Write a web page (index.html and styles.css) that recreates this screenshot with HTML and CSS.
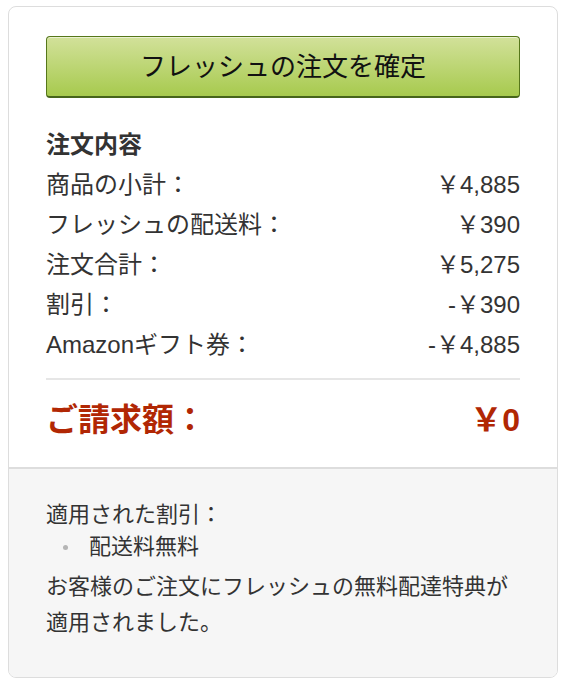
FILE: index.html
```html
<!DOCTYPE html>
<html lang="ja">
<head>
<meta charset="utf-8">
<link rel="stylesheet" href="styles.css">
</head>
<body>
<div class="card">
  <div class="main">
    <button class="place-btn" type="button">フレッシュの注文を確定</button>
    <h3 class="summary-title">注文内容</h3>
    <div class="row"><span>商品の小計：</span><span>￥4,885</span></div>
    <div class="row"><span>フレッシュの配送料：</span><span>￥390</span></div>
    <div class="row"><span>注文合計：</span><span>￥5,275</span></div>
    <div class="row"><span>割引：</span><span>-￥390</span></div>
    <div class="row"><span>Amazonギフト券：</span><span>-￥4,885</span></div>
    <div class="divider"></div>
    <div class="row total"><span>ご請求額：</span><span>￥0</span></div>
  </div>
  <div class="foot">
    <div class="foot-title">適用された割引：</div>
    <ul class="promo-list">
      <li>配送料無料</li>
    </ul>
    <p class="note">お客様のご注文にフレッシュの無料配達特典が適用されました。</p>
  </div>
</div>
</body>
</html>
```
FILE: styles.css
```css
* { box-sizing: border-box; }
html, body { background: #fff; }
body {
  margin: 6px 0 0 8px;
  font-family: "Liberation Sans", "Noto Sans CJK JP", sans-serif;
  color: #333;
}
.card {
  width: 550px;
  border: 1px solid #ddd;
  border-radius: 8px;
  overflow: hidden;
}
.main {
  padding: 29px 37px 25px;
  border-bottom: 2px solid #ddd;
}
.place-btn {
  display: block;
  width: 100%;
  height: 62px;
  margin: 0;
  padding: 0;
  border: 1px solid #56771a;
  border-bottom: 2px solid #46651a;
  border-radius: 4px;
  background: linear-gradient(#d2e19a, #a7ca4e);
  box-shadow: inset 0 1px 0 rgba(255,255,255,0.55);
  font-family: "Liberation Sans", "Noto Sans CJK JP", sans-serif;
  font-size: 26px;
  line-height: 58px;
  color: #111;
  text-align: center;
}
.summary-title {
  margin: 27px 0 0;
  font-size: 24px;
  line-height: 40px;
  font-weight: bold;
}
.row {
  display: flex;
  justify-content: space-between;
  font-size: 24px;
  line-height: 40px;
}
.divider {
  height: 2px;
  background: #e6e6e6;
  margin-top: 13px;
}
.row.total {
  margin-top: 18px;
  font-size: 32px;
  line-height: 44px;
  font-weight: bold;
  color: #b12704;
}
.foot {
  background: #f6f6f6;
  padding: 30px 37px 36px;
  font-size: 22px;
}
.foot-title { line-height: 32px; }
.promo-list {
  margin: 0;
  padding: 0 0 0 17px;
  list-style: none;
  line-height: 32px;
}
.promo-list li {
  display: flex;
  align-items: center;
}
.promo-list li::before {
  content: "";
  width: 5px;
  height: 5px;
  border-radius: 50%;
  background: #b5b5b5;
  margin-right: 21px;
  flex: none;
}
.note {
  margin: 6px 0 0;
  line-height: 36px;
}
```
